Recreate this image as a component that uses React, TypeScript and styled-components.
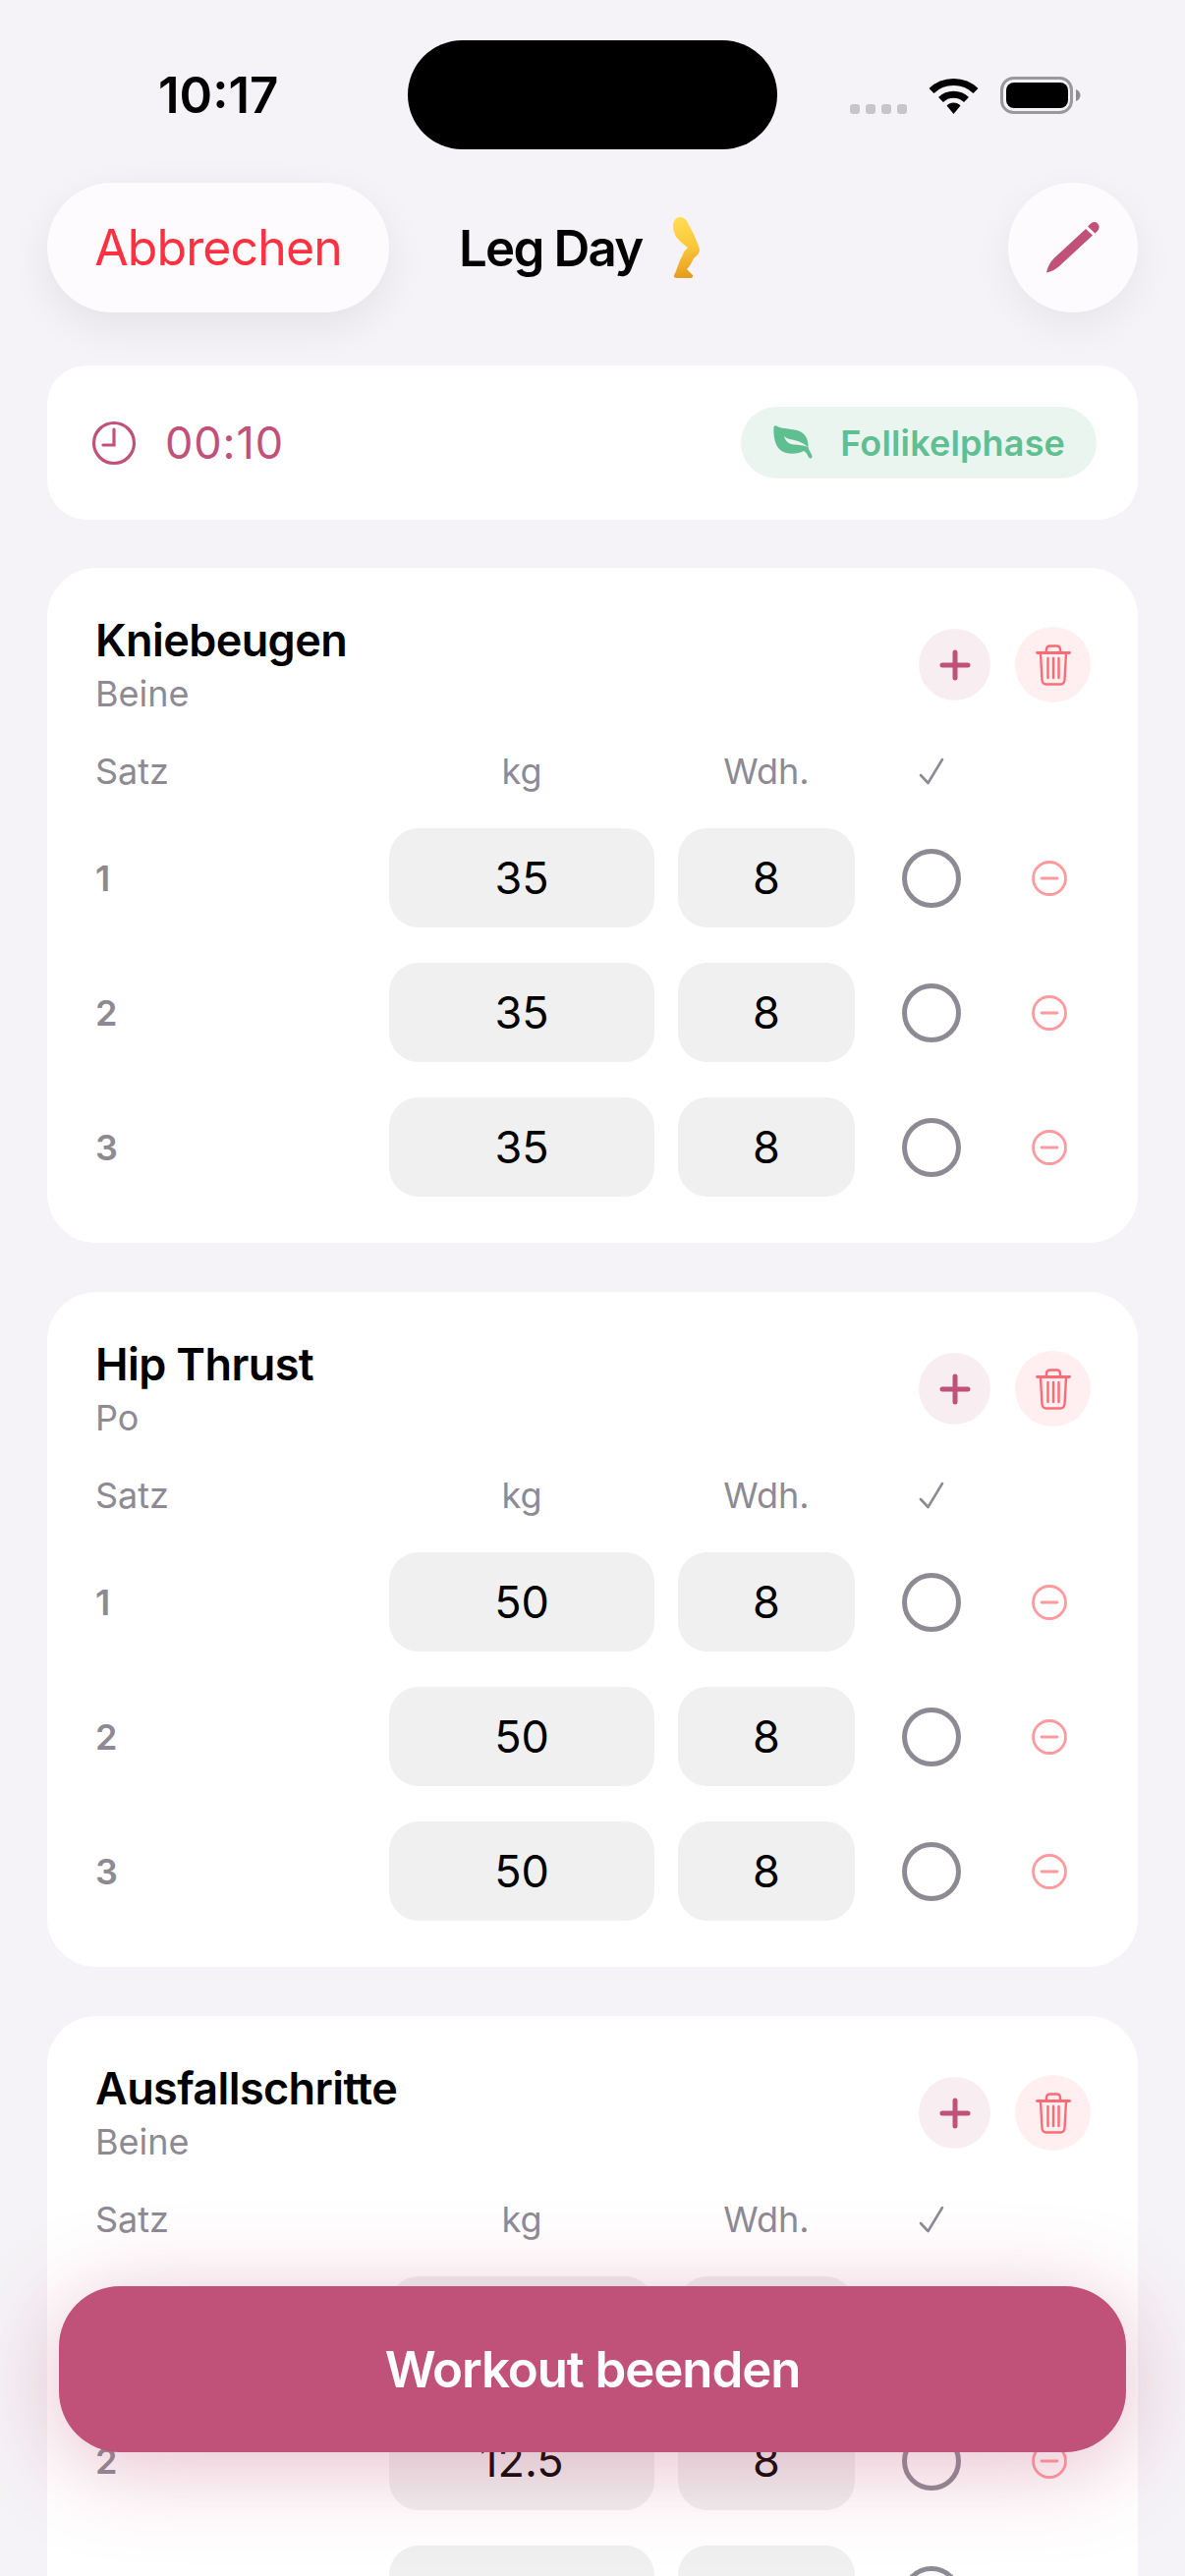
import React from 'react';
import styled, { createGlobalStyle } from 'styled-components';

const GlobalStyle = createGlobalStyle`
  html, body {
    margin: 0;
    padding: 0;
    background: #f5f3f7;
    font-family: Inter, "Noto Sans", "Liberation Sans", sans-serif;
  }
  * { box-sizing: border-box; }
`;

const Screen = styled.div`
  position: relative;
  width: 1206px;
  height: 2622px;
  overflow: hidden;
  background: #f5f3f7;
`;

const StatusBar = styled.div`
  display: grid;
  grid-template-columns: 415px 376px 1fr;
  height: 186px;
`;

const Time = styled.div`
  padding: 72px 0 0 161px;
  font-size: 51px;
  line-height: 50px;
  font-weight: 600;
  letter-spacing: 0;
  color: #000;
`;

const Island = styled.div`
  margin-top: 41px;
  height: 111px;
  border-radius: 56px;
  background: #000;
`;

const StatusIcons = styled.div`
  display: flex;
  align-items: flex-end;
  gap: 22px;
  height: 116px;
  padding-left: 74px;
`;

const SignalDots = styled.div`
  display: flex;
  gap: 6px;
`;

const Dot = styled.span`
  width: 10px;
  height: 10px;
  border-radius: 3px;
  background: #c6c5ca;
`;

const Header = styled.header`
  display: flex;
  align-items: center;
  height: 132px;
  margin: 0 48px 54px;
`;

const CancelButton = styled.button`
  width: 348px;
  height: 132px;
  border: none;
  border-radius: 66px;
  background: #fdfbfe;
  color: #ff3140;
  font: 400 50px Inter, sans-serif;
  letter-spacing: -0.9px;
  box-shadow: 0 14px 44px rgba(0, 0, 0, 0.07);
`;

const Title = styled.h1`
  display: flex;
  align-items: center;
  gap: 32px;
  margin: 0 0 0 71px;
  font-size: 51px;
  font-weight: 600;
  letter-spacing: -1.8px;
  color: #000;
`;

const EditButton = styled.button`
  display: flex;
  align-items: center;
  justify-content: center;
  width: 132px;
  height: 132px;
  margin-left: auto;
  padding: 0;
  border: none;
  border-radius: 50%;
  background: #fdfbfe;
  box-shadow: 0 14px 44px rgba(0, 0, 0, 0.06);
`;

const TimerCard = styled.section`
  display: flex;
  align-items: center;
  justify-content: space-between;
  height: 157px;
  margin: 0 48px 49px;
  padding: 0 42px 0 45px;
  border-radius: 40px;
  background: #fff;
`;

const TimerValue = styled.div`
  display: flex;
  align-items: center;
  gap: 29px;
  font-size: 45px;
  letter-spacing: 0.9px;
  color: #c05178;
`;

const PhasePill = styled.div`
  display: flex;
  align-items: center;
  gap: 28px;
  height: 73px;
  padding: 0 32px 0 33px;
  border-radius: 37px;
  background: #eaf5f0;
  color: #5fbf91;
  font-size: 36px;
  font-weight: 600;
  letter-spacing: 0.15px;
`;

const ExerciseCard = styled.section`
  margin: 0 48px 50px;
  padding: 47px 48px 47px 49px;
  border-radius: 50px;
  background: #fff;
`;

const ExerciseHead = styled.div`
  display: flex;
  justify-content: space-between;
  align-items: center;
  margin-bottom: 35px;
`;

const ExerciseName = styled.h2`
  margin: 0 0 5px;
  font-size: 45px;
  line-height: 54px;
  font-weight: 600;
  letter-spacing: -0.6px;
  color: #000;
`;

const Muscle = styled.div`
  font-size: 36px;
  line-height: 44px;
  color: #8e8a93;
`;

const HeadActions = styled.div`
  display: flex;
  align-items: center;
  gap: 25px;
`;

const RoundAction = styled.button<{ $size: number; $bg: string }>`
  display: flex;
  align-items: center;
  justify-content: center;
  width: ${({ $size }) => $size}px;
  height: ${({ $size }) => $size}px;
  padding: 0;
  border: none;
  border-radius: 50%;
  background: ${({ $bg }) => $bg};
`;

const SetGrid = styled.div`
  display: grid;
  grid-template-columns: 275px 270px 180px 108px 84px;
  column-gap: 24px;
  align-items: center;
`;

const ColumnRow = styled(SetGrid)`
  height: 44px;
  margin-bottom: 36px;
`;

const SetRow = styled(SetGrid)`
  height: 101px;
  margin-bottom: 36px;

  &:last-child {
    margin-bottom: 0;
  }
`;

const ColumnLabel = styled.div<{ $center?: boolean }>`
  display: flex;
  justify-content: ${({ $center }) => ($center ? 'center' : 'flex-start')};
  font-size: 36px;
  line-height: 44px;
  color: #8e8a93;
`;

const SetNumber = styled.div`
  font-size: 36px;
  font-weight: 600;
  color: #8e8a93;
`;

const ValueBox = styled.div`
  display: flex;
  align-items: center;
  justify-content: center;
  height: 101px;
  border-radius: 30px;
  background: #f0f0f0;
  font-size: 45px;
  color: #000;
`;

const DoneCircle = styled.span`
  justify-self: center;
  width: 60px;
  height: 60px;
  border: 5px solid #8e8a93;
  border-radius: 50%;
`;

const RemoveCell = styled.div`
  display: flex;
  justify-content: center;
`;

const FinishButton = styled.button`
  position: absolute;
  left: 60px;
  top: 2327px;
  width: 1086px;
  height: 169px;
  border: none;
  border-radius: 62px;
  background: #c05178;
  color: #fff;
  font: 600 51px Inter, sans-serif;
  letter-spacing: -1.1px;
  box-shadow: 0 14px 90px rgba(192, 81, 120, 0.38);
`;

const WifiIcon = () => (
  <svg width="51" height="38" viewBox="0 0 51 38">
    <path d="M3 14.5C15 2.5 36 2.5 48 14.5" fill="none" stroke="#000" strokeWidth="7" />
    <path d="M12.5 23.5C19.5 16.5 31.5 16.5 38.5 23.5" fill="none" stroke="#000" strokeWidth="7" />
    <path d="M18.5 29.5C22 25.5 29 25.5 32.5 29.5L25.5 38Z" fill="#000" />
  </svg>
);

const BatteryIcon = () => (
  <svg width="82" height="38" viewBox="0 0 82 38">
    <rect x="1.5" y="1.5" width="71" height="35" rx="12" fill="none" stroke="#99989d" strokeWidth="3" />
    <rect x="6" y="6" width="63" height="26" rx="8" fill="#000" />
    <path d="M77 13c3 1 4.5 3.5 4.5 6s-1.5 5-4.5 6z" fill="#8e8d92" />
  </svg>
);

const LegEmoji = () => (
  <svg width="28" height="62" viewBox="0 0 28 62">
    <defs>
      <linearGradient id="legFill" x1="0.35" y1="0" x2="0.45" y2="1">
        <stop offset="0" stopColor="#ffdc52" />
        <stop offset="0.5" stopColor="#fbc83a" />
        <stop offset="1" stopColor="#e59a1e" />
      </linearGradient>
    </defs>
    <path
      d="M7 0C11 0 14 3 15 6C19 13 24 23 26 30C28 34 27 37 21 42C19 46 17 50 14 53L20 59Q20.5 62 18 62L3 62Q0 61 1 59L3 55C5 49 7 43 10 38C11 35 13 33 15 31C11 28 6 24 3 20C1 16 0 13 0 9C0 4 3 0 7 0Z"
      fill="url(#legFill)"
    />
  </svg>
);

const PencilIcon = () => (
  <svg width="56" height="54" viewBox="0 0 56 54" fill="#c05178">
    <path d="M41 8L48 14.500L14 46C10 49.500 6 51.500 1 52.500C2 47 4.500 42 8.500 38Z" />
    <path d="M44.500 4C47 1 50.500 0 53 2.500C55.500 5 55 8.500 52 11L50.500 12.500L43 5.500Z" />
  </svg>
);

const ClockIcon = () => (
  <svg width="46" height="46" viewBox="0 0 46 46" fill="none" stroke="#c05178" strokeWidth="3.2" strokeLinecap="round">
    <circle cx="23" cy="23" r="20.5" />
    <path d="M23 9V25H12" />
  </svg>
);

const LeafIcon = () => (
  <svg width="40" height="36" viewBox="0 0 40 36">
    <path
      d="M0.5 2C1 0 2.500 0 4 1C10 4 20 3 27 6C33 9 36 15 35.500 22C36 25 39 29 39.500 31C40 33.500 37 34.500 36 32.500C34.500 29 33 27 31 26C24 30 12 30 6 24C1 19 0 8 0.500 2Z"
      fill="#5fbf91"
    />
    <path d="M11 11C15 15 20 14 25 16C29 17.500 32 19 35 22C30 20 26 20 21 19.500C16 19 12 16 11 11Z" fill="#eaf5f0" />
  </svg>
);

const PlusIcon = () => (
  <svg width="32" height="32" viewBox="0 0 32 32" stroke="#c05178" strokeWidth="5" strokeLinecap="round">
    <path d="M16 3V29M3 16H29" />
  </svg>
);

const TrashIcon = () => (
  <svg width="36" height="42" viewBox="0 0 36 42" fill="none" stroke="#ff6b74" strokeWidth="2.4" strokeLinecap="round" strokeLinejoin="round">
    <path d="M1.5 8.5H34.5" strokeWidth="2.8" />
    <path d="M11 8V5C11 2.8 12.5 1.5 14.5 1.5H21.5C23.5 1.5 25 2.8 25 5V8" />
    <path d="M5 9L6.5 36C6.7 39 8 40.5 11 40.5H25C28 40.5 29.3 39 29.5 36L31 9" />
    <path d="M12.5 14V34M18 14V34M23.5 14V34" />
  </svg>
);

const CheckGlyph = () => (
  <svg width="26" height="28" viewBox="0 0 26 28" fill="none" stroke="#8e8a93" strokeWidth="2.6" strokeLinecap="round" strokeLinejoin="round">
    <path d="M2 18L9.5 26L24 2" />
  </svg>
);

const MinusCircleIcon = () => (
  <svg width="36" height="36" viewBox="0 0 36 36" fill="none" stroke="#ff9a9e" strokeWidth="2.8" strokeLinecap="round">
    <circle cx="18" cy="18" r="16.5" />
    <path d="M10 18H26" />
  </svg>
);

interface Exercise {
  name: string;
  muscle: string;
  weight: string;
  reps: string;
}

const exercises: Exercise[] = [
  { name: 'Kniebeugen', muscle: 'Beine', weight: '35', reps: '8' },
  { name: 'Hip Thrust', muscle: 'Po', weight: '50', reps: '8' },
  { name: 'Ausfallschritte', muscle: 'Beine', weight: '12.5', reps: '8' },
];

const App: React.FC = () => {
  return (
    <Screen>
      <GlobalStyle />
      <StatusBar>
        <Time>10:17</Time>
        <Island />
        <StatusIcons>
          <SignalDots>
            <Dot />
            <Dot />
            <Dot />
            <Dot />
          </SignalDots>
          <WifiIcon />
          <BatteryIcon />
        </StatusIcons>
      </StatusBar>

      <Header>
        <CancelButton>Abbrechen</CancelButton>
        <Title>
          Leg Day
          <LegEmoji />
        </Title>
        <EditButton aria-label="Bearbeiten">
          <PencilIcon />
        </EditButton>
      </Header>

      <TimerCard>
        <TimerValue>
          <ClockIcon />
          00:10
        </TimerValue>
        <PhasePill>
          <LeafIcon />
          Follikelphase
        </PhasePill>
      </TimerCard>

      {exercises.map((exercise) => (
        <ExerciseCard key={exercise.name}>
          <ExerciseHead>
            <div>
              <ExerciseName>{exercise.name}</ExerciseName>
              <Muscle>{exercise.muscle}</Muscle>
            </div>
            <HeadActions>
              <RoundAction $size={73} $bg="#f8eef2" aria-label="Satz hinzufügen">
                <PlusIcon />
              </RoundAction>
              <RoundAction $size={77} $bg="#ffeff0" aria-label="Übung löschen">
                <TrashIcon />
              </RoundAction>
            </HeadActions>
          </ExerciseHead>

          <ColumnRow>
            <ColumnLabel>Satz</ColumnLabel>
            <ColumnLabel $center>kg</ColumnLabel>
            <ColumnLabel $center>Wdh.</ColumnLabel>
            <ColumnLabel $center>
              <CheckGlyph />
            </ColumnLabel>
            <span />
          </ColumnRow>

          {[1, 2, 3].map((setNumber) => (
            <SetRow key={setNumber}>
              <SetNumber>{setNumber}</SetNumber>
              <ValueBox>{exercise.weight}</ValueBox>
              <ValueBox>{exercise.reps}</ValueBox>
              <DoneCircle />
              <RemoveCell>
                <MinusCircleIcon />
              </RemoveCell>
            </SetRow>
          ))}
        </ExerciseCard>
      ))}

      <FinishButton>Workout beenden</FinishButton>
    </Screen>
  );
};

export default App;
